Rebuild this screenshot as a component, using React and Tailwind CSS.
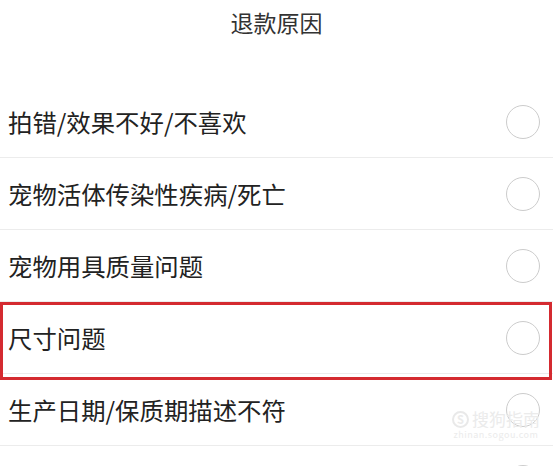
import React from "react";

const reasons = [
  "拍错/效果不好/不喜欢",
  "宠物活体传染性疾病/死亡",
  "宠物用具质量问题",
  "尺寸问题",
  "生产日期/保质期描述不符",
  "其他",
];

export default function App() {
  return (
    <div
      className="relative w-[553px] h-[466px] overflow-hidden bg-white text-[#222]"
      style={{ fontFamily: '"Noto Sans CJK SC", "Noto Sans", sans-serif' }}
    >
      {/* Title */}
      <div className="h-[86px] pt-[8px] text-center text-[23px] leading-[28px] text-[#333]">
        退款原因
      </div>

      {/* Reason list */}
      <div className="flex flex-col">
        {reasons.map((r) => (
          <div
            key={r}
            className="flex h-[72px] shrink-0 items-center justify-between border-b border-[#ececec] pl-[8px] pr-[13px]"
          >
            <span className="text-[24.4px] leading-[30px]">{r}</span>
            <span className="h-[34px] w-[34px] rounded-full border-[1.5px] border-[#cccccc]" />
          </div>
        ))}
      </div>

      {/* Highlight annotation */}
      <div className="pointer-events-none absolute left-0 top-[302px] h-[78px] w-[552px] border-[3px] border-[#d42a30]" />

      {/* Watermark */}
      <div className="pointer-events-none absolute left-[452px] top-[409px] flex flex-col items-center text-[#ebebeb]">
        <div className="flex items-center gap-[3px]">
          <span className="flex h-[17px] w-[17px] items-center justify-center rounded-full border-[2px] border-[#e9e9e9] text-[11px] font-bold leading-none">
            S
          </span>
          <span className="text-[17px] leading-[20px]">搜狗指南</span>
        </div>
        <span className="text-[9px] leading-[12px] tracking-[0.5px]">zhinan.sogou.com</span>
      </div>
    </div>
  );
}
